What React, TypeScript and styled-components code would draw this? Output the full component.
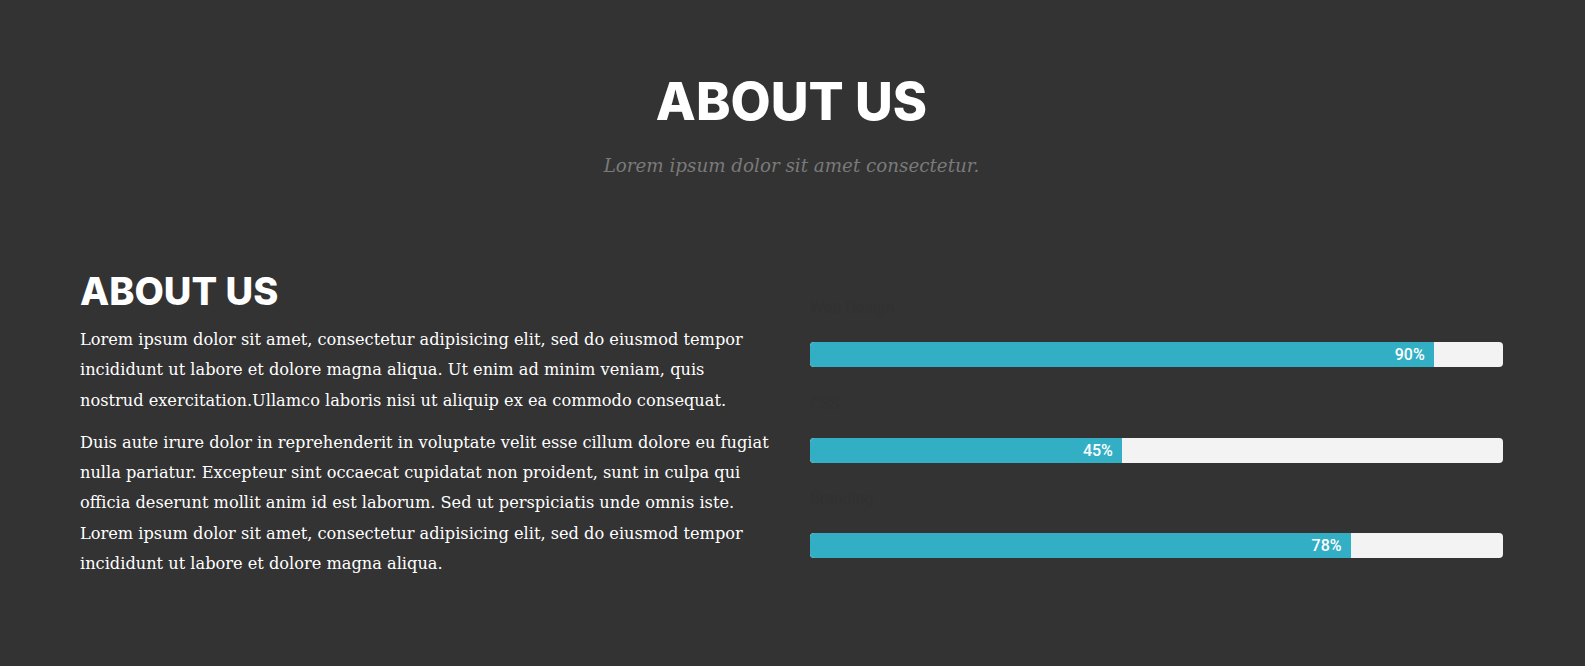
import React from "react";
import styled, { createGlobalStyle } from "styled-components";

const GlobalStyle = createGlobalStyle`
  html, body {
    margin: 0;
    padding: 0;
    background: #333333;
  }
  * { box-sizing: border-box; }
`;

const Section = styled.section`
  background: #333333;
  min-height: 666px;
  padding: 76px 82px 0 80px;
`;

const Header = styled.header`
  text-align: center;
`;

const Title = styled.h2`
  margin: 0;
  font-family: "Inter", "DejaVu Sans", sans-serif;
  font-weight: 800;
  font-size: 52px;
  line-height: 52px;
  color: #ffffff;
  text-transform: uppercase;
`;

const Subtitle = styled.p`
  margin: 26px 0 0;
  font-family: "DejaVu Serif", serif;
  font-style: italic;
  font-size: 18.3px;
  line-height: 24px;
  color: #7a7a7a;
`;

const Content = styled.div`
  display: grid;
  grid-template-columns: 1fr 1fr;
  column-gap: 37px;
  margin-top: 94px;
`;

const Column = styled.div`
  min-width: 0;
`;

const Heading = styled.h3`
  margin: 0 0 15px;
  font-family: "Inter", "DejaVu Sans", sans-serif;
  font-weight: 800;
  font-size: 38px;
  line-height: 38px;
  color: #ffffff;
  text-transform: uppercase;
`;

const Paragraph = styled.p`
  margin: 0 0 12px;
  font-family: "DejaVu Serif", serif;
  font-size: 16.2px;
  line-height: 30.3px;
  color: #ffffff;
`;

const Skills = styled.div`
  padding-top: 26px;
`;

const Skill = styled.div`
  margin-bottom: 26.5px;
`;

const Label = styled.div`
  font-family: "Roboto", sans-serif;
  font-size: 16px;
  line-height: 20px;
  color: #313131;
  margin-bottom: 24px;
`;

const Track = styled.div`
  height: 25px;
  background: #f3f3f3;
  border-radius: 4px;
  overflow: hidden;
  display: flex;
`;

const Fill = styled.div`
  height: 100%;
  background: #33afc5;
  border-radius: 4px 0 0 4px;
  display: flex;
  justify-content: flex-end;
  align-items: center;
  padding-right: 9px;
  font-family: "Roboto", sans-serif;
  font-weight: 500;
  font-size: 16px;
  color: #ffffff;
`;

const skills = [
  { label: "Web Design", value: 90 },
  { label: "CSS", value: 45 },
  { label: "Branding", value: 78 },
];

export default function App() {
  return (
    <>
      <GlobalStyle />
      <Section>
        <Header>
          <Title>About Us</Title>
          <Subtitle>Lorem ipsum dolor sit amet consectetur.</Subtitle>
        </Header>
        <Content>
          <Column>
            <Heading>About Us</Heading>
            <Paragraph>
              Lorem ipsum dolor sit amet, consectetur adipisicing elit, sed do eiusmod tempor
              incididunt ut labore et dolore magna aliqua. Ut enim ad minim veniam, quis
              nostrud exercitation.Ullamco laboris nisi ut aliquip ex ea commodo consequat.
            </Paragraph>
            <Paragraph>
              Duis aute irure dolor in reprehenderit in voluptate velit esse cillum dolore eu fugiat
              nulla pariatur. Excepteur sint occaecat cupidatat non proident, sunt in culpa qui
              officia deserunt mollit anim id est laborum. Sed ut perspiciatis unde omnis iste.
              Lorem ipsum dolor sit amet, consectetur adipisicing elit, sed do eiusmod tempor
              incididunt ut labore et dolore magna aliqua.
            </Paragraph>
          </Column>
          <Column>
            <Skills>
              {skills.map((s) => (
                <Skill key={s.label}>
                  <Label>{s.label}</Label>
                  <Track>
                    <Fill style={{ width: `${s.value}%` }}>{s.value}%</Fill>
                  </Track>
                </Skill>
              ))}
            </Skills>
          </Column>
        </Content>
      </Section>
    </>
  );
}
